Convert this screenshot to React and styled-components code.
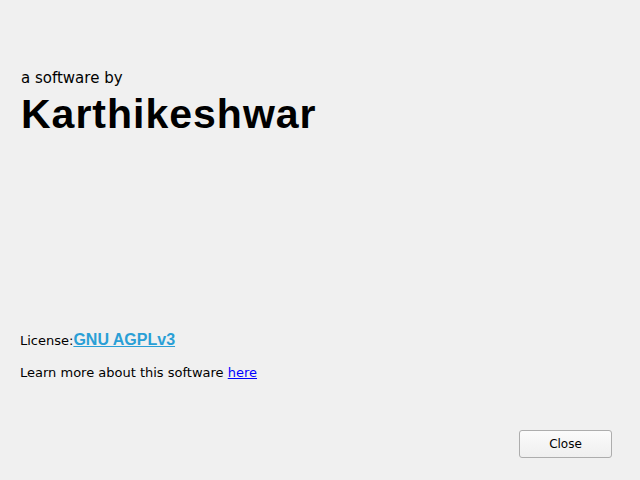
import styled, { createGlobalStyle } from 'styled-components';

const GlobalStyle = createGlobalStyle`
  html, body {
    margin: 0;
    padding: 0;
    background: #f0f0f0;
  }
`;

const Dialog = styled.div`
  box-sizing: border-box;
  width: 640px;
  height: 480px;
  padding: 68px 28px 22px 20px;
  display: flex;
  flex-direction: column;
  background: #f0f0f0;
  font-family: 'DejaVu Sans', Tahoma, sans-serif;
  color: #000;
`;

const Byline = styled.div`
  font-size: 15px;
  line-height: 20px;
  padding-left: 1px;
`;

const Author = styled.h1`
  margin: 0;
  padding-left: 1px;
  font-family: 'Liberation Sans', Arial, sans-serif;
  font-weight: bold;
  font-size: 41px;
  line-height: 52px;
  letter-spacing: 1px;
`;

const Spacer = styled.div`
  flex: 1;
`;

const InfoLine = styled.div`
  font-size: 13px;
  line-height: 20px;
  margin-bottom: ${(p) => p.gap || 0}px;
`;

const LicenseLink = styled.a`
  font-family: 'Liberation Sans', Arial, sans-serif;
  font-weight: bold;
  font-size: 16px;
  color: #2a9fd6;
  text-decoration: underline;
`;

const PlainLink = styled.a`
  color: #0000ff;
  text-decoration: underline;
`;

const ButtonRow = styled.div`
  display: flex;
  justify-content: flex-end;
  margin-top: 47px;
`;

const Button = styled.button`
  width: 93px;
  height: 28px;
  border: 1px solid #adadad;
  border-radius: 3px;
  background: linear-gradient(#fbfbfb, #efefef);
  font-family: 'DejaVu Sans', Tahoma, sans-serif;
  font-size: 12px;
  color: #000;
`;

export default function App() {
  return (
    <>
      <GlobalStyle />
      <Dialog>
        <Byline>a software by</Byline>
        <Author>Karthikeshwar</Author>
        <Spacer />
        <InfoLine gap={12}>
          License:<LicenseLink href="#">GNU AGPLv3</LicenseLink>
        </InfoLine>
        <InfoLine>
          Learn more about this software <PlainLink href="#">here</PlainLink>
        </InfoLine>
        <ButtonRow>
          <Button>Close</Button>
        </ButtonRow>
      </Dialog>
    </>
  );
}
